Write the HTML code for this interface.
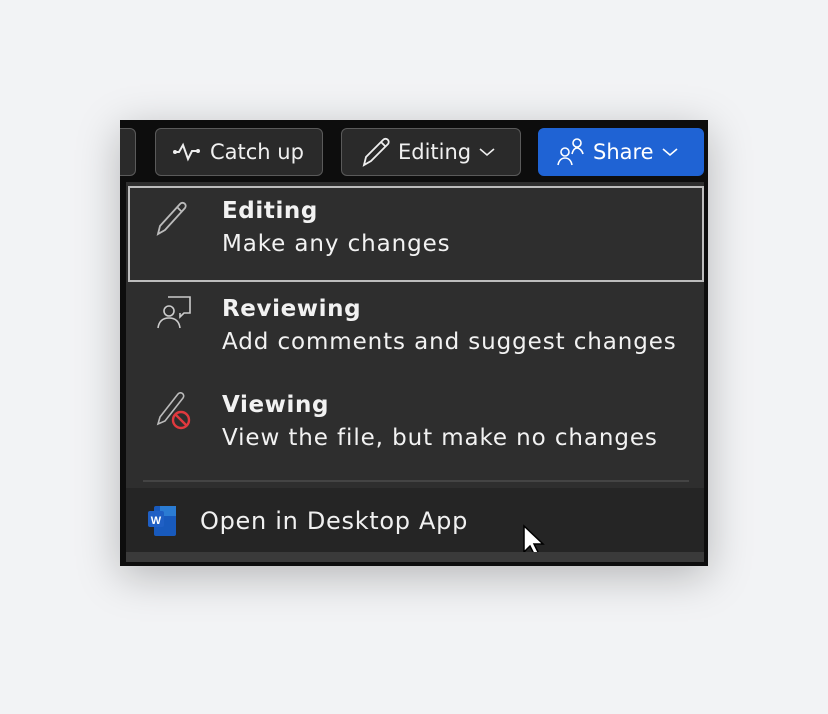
<!DOCTYPE html>
<html><head><style>
*{margin:0;padding:0;box-sizing:border-box}
body{width:828px;height:714px;background:#f2f3f5;position:relative;font-family:"DejaVu Sans","Liberation Sans",sans-serif;overflow:hidden}
.frame{position:absolute;left:120px;top:120px;width:588px;height:446px;background:#0d0d0d;box-shadow:0 10px 40px rgba(0,0,0,.25);overflow:hidden}
.btn{position:absolute;top:8px;height:48px;border:1px solid #5a5a5a;border-radius:6px;background:#2a2a2a;color:#f0f0f0;font-size:21px;display:flex;align-items:center}
.panel{position:absolute;left:6px;top:62px;width:578px;height:370px;background:#2e2e2e}
.item{position:absolute;left:0;width:578px;height:96px;color:#f2f2f2}
.t{position:absolute;left:96px;font-size:23px;letter-spacing:0.9px;white-space:nowrap}
.b{font-weight:bold;top:14px;letter-spacing:0.6px}
.s{top:47px}
.ic{position:absolute;left:28px;top:14px}
</style></head><body>
<div class="frame">
 <div class="btn" style="left:-10px;width:26px"></div>
 <div class="btn" style="left:35px;width:168px">
  <svg style="margin-left:16px" width="34" height="22" viewBox="0 0 34 22"><path d="M2 11h5l4-7 5 14 4-8h5" fill="none" stroke="#eee" stroke-width="2"/><circle cx="3" cy="11" r="2" fill="#eee"/><circle cx="26" cy="10" r="2" fill="#eee"/></svg>
  <span style="margin-left:4px">Catch up</span></div>
 <div class="btn" style="left:221px;width:180px">
  <svg style="margin-left:16px" width="34" height="34" viewBox="0 0 34 34"><path d="M6 30l2-8L25 5a3 3 0 0 1 5 4L13 26z M23 7l4 4" fill="none" stroke="#eee" stroke-width="1.8"/></svg>
  <span style="margin-left:6px">Editing</span>
  <svg style="margin-left:8px" width="16" height="10" viewBox="0 0 16 10"><path d="M1 2l7 6 7-6" fill="none" stroke="#eee" stroke-width="1.6"/></svg></div>
 <div class="btn" style="left:418px;width:166px;background:#1f63d4;border-color:#1f63d4">
  <svg style="margin-left:16px" width="34" height="30" viewBox="0 0 34 30"><circle cx="10" cy="15" r="4" fill="none" stroke="#fff" stroke-width="1.6"/><path d="M3 28c1-5 4-7 7-7s6 2 7 7" fill="none" stroke="#fff" stroke-width="1.6"/><circle cx="22" cy="6" r="4" fill="none" stroke="#fff" stroke-width="1.6"/><path d="M17 17c1-4 3-6 5-6s5 2 6 6" fill="none" stroke="#fff" stroke-width="1.6"/></svg>
  <span style="margin-left:4px;color:#fff">Share</span>
  <svg style="margin-left:8px" width="16" height="10" viewBox="0 0 16 10"><path d="M1 2l7 6 7-6" fill="none" stroke="#fff" stroke-width="1.6"/></svg></div>
 <div class="panel">
  <div class="item" style="top:4px;left:2px;width:576px;height:96px;border:2px solid #bdbdbd">
   <svg class="ic" style="left:22px;top:10px" width="40" height="40" viewBox="0 0 40 40"><path d="M6 36l2-8L28 6a3 3 0 0 1 5 4L13 32z M25 9l4 4" fill="none" stroke="#bbb" stroke-width="1.8"/></svg>
   <div class="t b" style="left:92px;top:10px">Editing</div><div class="t s" style="left:92px;top:43px">Make any changes</div></div>
  <div class="item" style="top:100px">
   <svg class="ic" style="top:10px" width="40" height="40" viewBox="0 0 40 40"><path d="M14 5h22v16h-6l-4 4v-4" fill="none" stroke="#ccc" stroke-width="1.6"/><circle cx="15" cy="19" r="5" fill="none" stroke="#ccc" stroke-width="1.6"/><path d="M4 36c1-7 5-10 11-10s10 3 11 10" fill="none" stroke="#ccc" stroke-width="1.6"/></svg>
   <div class="t b">Reviewing</div><div class="t s">Add comments and suggest changes</div></div>
  <div class="item" style="top:196px">
   <svg class="ic" style="top:10px" width="40" height="44" viewBox="0 0 40 44"><path d="M4 36l2-7L24 6a3 3 0 0 1 5 4L11 33z" fill="none" stroke="#bbb" stroke-width="1.6"/><circle cx="27" cy="32" r="8" fill="none" stroke="#e0393e" stroke-width="2.4"/><path d="M21 26l12 12" stroke="#e0393e" stroke-width="2.4"/></svg>
   <div class="t b">Viewing</div><div class="t s">View the file, but make no changes</div></div>
  <div style="position:absolute;left:17px;top:298px;width:546px;height:2px;background:#444"></div>
  <div style="position:absolute;left:0;top:306px;width:578px;height:64px;background:#252525">
   <svg style="position:absolute;left:20px;top:16px" width="34" height="34" viewBox="0 0 34 34"><rect x="8" y="2" width="22" height="30" rx="2" fill="#185abd"/><rect x="14" y="2" width="16" height="10" fill="#2b7cd3"/><rect x="2" y="7" width="16" height="16" rx="2" fill="#1f5fc4"/><text x="10" y="20" font-size="11" font-weight="bold" fill="#fff" text-anchor="middle" font-family="Liberation Sans">W</text></svg>
   <div style="position:absolute;left:74px;top:19px;font-size:24px;letter-spacing:0.7px;color:#f0f0f0;white-space:nowrap">Open in Desktop App</div>
   <svg style="position:absolute;left:396px;top:36px" width="24" height="34" viewBox="0 0 24 34"><path d="M2 2v26l6-6 5 10 4-2-5-10h9z" fill="#fff" stroke="#000" stroke-width="1.5"/></svg>
  </div>
 </div>
 <div style="position:absolute;left:6px;top:432px;width:578px;height:10px;background:#3a3a3a"></div>
</div>
</body></html>
